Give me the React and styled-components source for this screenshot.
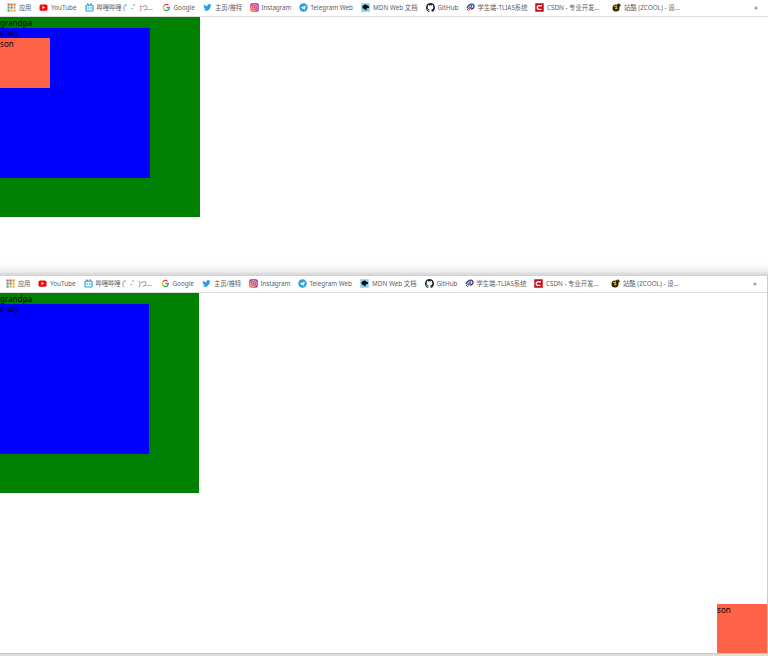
import React from 'react';
import styled, { createGlobalStyle } from 'styled-components';

const GlobalStyle = createGlobalStyle`
  * { box-sizing: border-box; }
  body { margin: 0; background: #fff; overflow: hidden; }
`;

const Page = styled.main`
  width: 768px;
  height: 656px;
  display: flex;
  flex-direction: column;
  overflow: hidden;
  background: #fff;
  color: #000;
  font-family: "Noto Sans", "Noto Sans CJK SC", sans-serif;
`;

const FirstWindow = styled.section`
  height: 276px;
  flex: none;
  background: linear-gradient(#fff 0 262px, #fafafa 266px, #eee 271px, #d0d0d0 276px);
`;

const SecondWindow = styled.section`
  width: 768px;
  height: 378px;
  flex: none;
  display: flex;
  flex-direction: column;
  background: #fff;
  border-right: 1px solid #cbcbcb;
  border-bottom: 1px solid #c6c6c6;
`;

const BottomEdge = styled.div`
  flex: 1;
  background: #dedede;
`;

const Bookmarks = styled.nav`
  height: 17px;
  flex: none;
  display: grid;
  grid-template-columns: 32px 45.5px 77px 41.5px 46.5px 49px 62.5px 64.5px 40px 69.5px 77px 142px 10px;
  align-items: center;
  padding: 0 0 1px ${(p) => p.$inset}px;
  border-bottom: 1px solid #dcdcdc;
  background: #fff;
  overflow: hidden;
`;

const Bookmark = styled.div`
  display: flex;
  align-items: center;
  gap: 3px;
  min-width: 0;
  color: #5b5e63;

  svg { display: block; width: 9px; height: 9px; flex: none; }
`;

const Label = styled.span`
  font-size: 6.3px;
  line-height: 9px;
  white-space: nowrap;
  letter-spacing: ${(p) => p.$track || 0}px;
`;

const Chevron = styled.span`
  font-size: 7px;
  line-height: 9px;
  padding-bottom: 1px;
  color: #55585c;
`;

const Box = styled.div`
  width: ${(p) => p.$width}px;
  height: ${(p) => p.$height}px;
  flex: none;
  background: ${(p) => p.$color};
`;

const Caption = styled.div`
  height: ${(p) => p.$height || 11}px;
  font-size: 8px;
  line-height: ${(p) => p.$height || 11}px;
  letter-spacing: 0.06px;
`;

const CornerSlot = styled.div`
  flex: 1;
  display: flex;
  align-items: flex-end;
  justify-content: flex-end;
`;

const AppsIcon = () => (
  <svg viewBox="0 0 18 18">
    {[1, 7, 13].flatMap((y, r) => [1, 7, 13].map((x, c) => (
      <rect key={`${x}-${y}`} x={x} y={y} width="4.3" height="4.3"
        fill={[['#e5534b', '#e5534b', '#e8833a'], ['#48a75b', '#4d86e8', '#edae35'], ['#48a75b', '#edae35', '#edae35']][r][c]} />
    )))}
  </svg>
);

const YouTubeIcon = () => (
  <svg viewBox="0 0 18 18">
    <rect x="1" y="3" width="16" height="12.5" rx="3" fill="#f20808" />
    <path d="M7 6.2 12 9.2 7 12.2Z" fill="#fff" />
  </svg>
);

const BiliIcon = () => (
  <svg viewBox="0 0 18 18" fill="none" stroke="#20a5d8" strokeWidth="2.4">
    <rect x="2" y="4.5" width="14" height="11.5" rx="1.5" />
    <path d="m4.5 1 3 3m6-3-3 3M6.3 8.5v3m5.4-3v3" />
  </svg>
);

const GoogleIcon = () => (
  <svg viewBox="0 0 18 18" fill="none" strokeWidth="2.6">
    <path d="M4 5.5A6 6 0 0 1 13 4.5" stroke="#ea4335" />
    <path d="M4 5.5a6 6 0 0 0 0 7" stroke="#fbbc05" />
    <path d="M4 12.5a6 6 0 0 0 8.5 1.4" stroke="#34a853" />
    <path d="M9 9h5.5a6 6 0 0 1-2.2 5" stroke="#4285f4" />
  </svg>
);

const TwitterIcon = () => (
  <svg viewBox="0 0 24 24" fill="#2b9fe6">
    <path d="M23 5.1a9 9 0 0 1-2.6.7 4.5 4.5 0 0 0 2-2.5 9 9 0 0 1-2.9 1.1 4.5 4.5 0 0 0-7.7 4.1A12.8 12.8 0 0 1 2.5 3.8a4.5 4.5 0 0 0 1.4 6 4.5 4.5 0 0 1-2-.6 4.5 4.5 0 0 0 3.6 4.5 4.5 4.5 0 0 1-2 .1 4.5 4.5 0 0 0 4.2 3.1A9 9 0 0 1 1 18.8 12.8 12.8 0 0 0 20.7 7.4 9 9 0 0 0 23 5.1Z" />
  </svg>
);

const InstagramIcon = () => (
  <svg viewBox="0 0 18 18">
    <defs>
      <linearGradient id="insta" x1="0" y1="1" x2=".9" y2="0">
        <stop stopColor="#f59a2a" /><stop offset=".45" stopColor="#dc1f55" /><stop offset="1" stopColor="#7a28c0" />
      </linearGradient>
    </defs>
    <rect x=".5" y=".5" width="17" height="17" rx="3.5" fill="url(#insta)" />
    <g fill="none" stroke="#fff" strokeWidth="1.3">
      <rect x="3.5" y="3.5" width="11" height="11" rx="3" /><circle cx="9" cy="9" r="2.6" />
    </g>
    <circle cx="12.3" cy="5.7" r=".8" fill="#fff" />
  </svg>
);

const TelegramIcon = () => (
  <svg viewBox="0 0 18 18">
    <circle cx="9" cy="9" r="8.4" fill="#2ba0da" />
    <path d="m3.5 8.8 10-4-1.8 9-3-2.2-1.6 1.5-.4-2.8Z" fill="#fff" />
    <path d="m6.8 10.2 4.7-3.5-3.5 4.5Z" fill="#9bcce5" />
  </svg>
);

const MdnIcon = () => (
  <svg viewBox="0 0 18 18">
    <rect x=".5" y=".5" width="17" height="17" fill="#83d0f2" />
    <path d="M3 7c2-3 6-5 8-3l5 3v3l-3-.5-1 2-1-.5v4L6 12 3 10Z" fill="#050505" />
  </svg>
);

const GitHubIcon = () => (
  <svg viewBox="0 0 16 16" fill="#24292f">
    <path d="M8 .2a8 8 0 0 0-2.5 15.6c.4.1.5-.2.5-.4v-1.5c-2.2.5-2.7-.9-2.7-.9-.4-.9-.9-1.2-.9-1.2-.7-.5.1-.5.1-.5.8.1 1.2.8 1.2.8.7 1.2 1.9.9 2.3.7.1-.5.3-.9.5-1.1-1.8-.2-3.6-.9-3.6-4 0-.9.3-1.6.8-2.1-.1-.2-.4-1 .1-2.1 0 0 .7-.2 2.2.8a7.5 7.5 0 0 1 4 0c1.5-1 2.2-.8 2.2-.8.4 1.1.2 1.9.1 2.1.5.5.8 1.2.8 2.1 0 3.1-1.9 3.8-3.7 4 .3.2.6.7.6 1.5v2.2c0 .2.1.5.5.4A8 8 0 0 0 8 .2Z" />
  </svg>
);

const StudentIcon = () => (
  <svg viewBox="0 0 18 18" fill="none">
    <path d="M2 10C5 3 12 0 15 4s-1 8-5 8" stroke="#23468c" strokeWidth="2.6" />
    <path d="M2 14 10 5l2 1-5 6" stroke="#2c4c8c" strokeWidth="2" />
    <path d="m8 9 3-4 1 3-3 5Z" fill="#ed3f45" />
    <path d="m4 16 4-4" stroke="#e54852" strokeWidth="2" />
  </svg>
);

const CsdnIcon = () => (
  <svg viewBox="0 0 18 18">
    <rect x=".5" y=".5" width="17" height="17" fill="#ca0c16" />
    <path d="M14 5.5H8.5C5.8 5.5 4.5 7 4.5 9.3s1.3 3.3 3.5 3.3h5" fill="none" stroke="#fff" strokeWidth="2.6" />
  </svg>
);

const ZcoolIcon = () => (
  <svg viewBox="0 0 18 18">
    <circle cx="8" cy="10" r="7" fill="#25220b" />
    <circle cx="13.5" cy="4.5" r="3.5" fill="#15130a" />
    <path d="m4 7 6-1-3 6 4-1" fill="none" stroke="#e4ce20" strokeWidth="2" />
    <path d="m13 2 1 3 3 1" fill="none" stroke="#b7a52a" />
  </svg>
);

const bookmarks = [
  { icon: AppsIcon, label: '应用', track: -0.2 },
  { icon: YouTubeIcon, label: 'YouTube' },
  { icon: BiliIcon, label: '哔哩哔哩 (゜-゜)つ...', track: -0.03 },
  { icon: GoogleIcon, label: 'Google' },
  { icon: TwitterIcon, label: '主页/推特', track: -0.1 },
  { icon: InstagramIcon, label: 'Instagram', track: -0.1 },
  { icon: TelegramIcon, label: 'Telegram Web' },
  { icon: MdnIcon, label: 'MDN Web 文档', track: 0.04 },
  { icon: GitHubIcon, label: 'GitHub' },
  { icon: StudentIcon, label: '学生端-TLIAS系统' },
  { icon: CsdnIcon, label: 'CSDN - 专业开发...' },
  { icon: ZcoolIcon, label: '站酷 (ZCOOL) - 设...', track: 0.03 },
];

const BookmarkBar = ({ inset }) => (
  <Bookmarks $inset={inset}>
    {bookmarks.map(({ icon: Icon, label, track }) => (
      <Bookmark key={label}><Icon /><Label $track={track}>{label}</Label></Bookmark>
    ))}
    <Chevron>»</Chevron>
  </Bookmarks>
);

const Son = ({ height }) => (
  <Box $width={50} $height={height} $color="#ff6347"><Caption>son</Caption></Box>
);

export default function App() {
  return (
    <Page>
      <GlobalStyle />
      <FirstWindow>
        <BookmarkBar inset={7} />
        <Box $width={200} $height={200} $color="#008000">
          <Caption>grandpa</Caption>
          <Box $width={150} $height={150} $color="#0000ff">
            <Caption $height={10}>dady</Caption>
            <Son height={50} />
          </Box>
        </Box>
      </FirstWindow>
      <SecondWindow>
        <BookmarkBar inset={6} />
        <Box $width={199} $height={200} $color="#008000">
          <Caption>grandpa</Caption>
          <Box $width={149} $height={150} $color="#0000ff">
            <Caption $height={10}>dady</Caption>
          </Box>
        </Box>
        <CornerSlot><Son height={49} /></CornerSlot>
      </SecondWindow>
      <BottomEdge />
    </Page>
  );
}
